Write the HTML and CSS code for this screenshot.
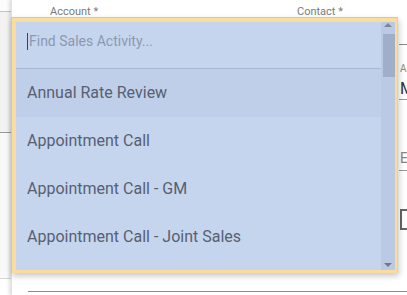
FILE: index.html
```html
<!DOCTYPE html>
<html>
<head>
<meta charset="utf-8">
<link rel="stylesheet" href="styles.css">
</head>
<body>
<div class="page">
  <div class="side">
    <div class="side-a"></div>
    <div class="side-b"></div>
    <div class="side-c"></div>
    <div class="side-d"></div>
  </div>
  <div class="main">
    <div class="labels">
      <span class="lbl">Account *</span>
      <span class="lbl">Contact *</span>
    </div>
    <div class="body">
      <div class="left-col"></div>
      <div class="right-col">
        <div class="rline first"></div>
        <div class="rlabel">As</div>
        <div class="rvalue">M</div>
        <div class="rline"></div>
        <div class="rlabel2">E</div>
        <div class="rline"></div>
        <div class="rbox"></div>
      </div>
    </div>
    <div class="bottom-line"></div>
  </div>

  <div class="dropdown">
    <div class="dd-inner">
      <div class="dd-list">
        <div class="search"><span class="caret"></span><input class="search-input" placeholder="Find Sales Activity..."></div>
        <div class="item active">Annual Rate Review</div>
        <div class="item">Appointment Call</div>
        <div class="item">Appointment Call - GM</div>
        <div class="item">Appointment Call - Joint Sales</div>
      </div>
      <div class="scrollbar">
        <div class="arrow up"></div>
        <div class="thumb"></div>
        <div class="track-rest"></div>
        <div class="arrow down"></div>
      </div>
    </div>
  </div>
</div>
</body>
</html>
```
FILE: styles.css
```css
* { box-sizing: border-box; }
html, body { margin: 0; padding: 0; }
body {
  width: 407px;
  height: 295px;
  overflow: hidden;
  background: #fff;
  font-family: Roboto, "Liberation Sans", sans-serif;
}
.page {
  position: relative;
  display: grid;
  grid-template-columns: 11px 1fr;
  width: 407px;
  height: 295px;
  overflow: hidden;
}
.side {
  display: flex;
  flex-direction: column;
  background: #f7f7f7;
}
.side-a { height: 12px; background: #fcfcfc; border-bottom: 1px solid #c4c4c4; }
.side-b { height: 121px; background: #f2f2f2; border-bottom: 1px solid #9a9a9a; }
.side-c { height: 146px; background: #f8f8f8; border-bottom: 1px solid #d8d8d8; }
.side-d { flex: 1; background: #fff; }

.main {
  position: relative;
  background: #fff;
  border-left: 1px solid #e2e2e2;
  box-shadow: -2px 0 3px rgba(0,0,0,0.12);
  display: flex;
  flex-direction: column;
}
.labels {
  display: grid;
  grid-template-columns: 247px 1fr;
  padding-left: 38px;
  padding-top: 5px;
  height: 20px;
}
.lbl {
  font-size: 11px;
  line-height: 14px;
  color: #7a7a7a;
}
.body {
  display: grid;
  grid-template-columns: 387px 1fr;
  height: 271px;
}
.right-col {
  display: flex;
  flex-direction: column;
  padding-left: 1px;
  overflow: hidden;
}
.rline { height: 1px; background: #9a9a9a; margin-left: -1px; }
.rline.first { margin-top: 24px; background: #8a8a8a; }
.rlabel { margin-top: 18px; font-size: 10px; line-height: 12px; color: #8a8a8a; white-space: nowrap; }
.rvalue { margin-top: 5px; font-size: 16px; line-height: 18px; color: #333; white-space: nowrap; height: 18px; }
.rvalue + .rline { margin-top: 1px; }
.rlabel2 { margin-top: 50px; font-size: 14px; line-height: 16px; color: #888; height: 16px; }
.rlabel2 + .rline { margin-top: 4px; }
.rbox {
  margin-top: 38px;
  width: 20px;
  height: 21px;
  border: 2px solid #666;
}
.bottom-line {
  margin-left: 16px;
  height: 1px;
  background: #8c8c8c;
}

.dropdown {
  position: absolute;
  left: 11px;
  top: 17px;
  width: 387px;
  height: 256px;
  border: 1px solid #cfc8b8;
  border-right-color: #d8d2c2;
  border-bottom: none;
  background: #fadc9e;
  padding: 4px 2px 3px 4px;
  box-shadow: 1px 3px 6px rgba(0,0,0,0.22);
}
.dd-inner {
  display: flex;
  width: 100%;
  height: 100%;
  background: #c5d5ee;
  overflow: hidden;
}
.dd-list {
  width: 365px;
  display: flex;
  flex-direction: column;
}
.search {
  height: 47px;
  display: flex;
  align-items: center;
  padding-left: 11px;
  border-bottom: 1px solid #a9b8d2;
  padding-bottom: 8px;
}
.caret {
  width: 1px;
  height: 17px;
  background: #2b3f9a;
  margin-right: 1px;
}
.search-input {
  border: none;
  outline: none;
  background: transparent;
  font-family: Roboto, "Liberation Sans", sans-serif;
  font-size: 14px;
  padding: 0;
  width: 300px;
  color: #4b5568;
}
.search-input::placeholder { color: #8c98b2; }
.item {
  height: 48px;
  display: flex;
  align-items: center;
  padding-left: 11px;
  padding-bottom: 1px;
  font-size: 16px;
  color: #566072;
  white-space: nowrap;
}
.item.active { background: #bfcfe9; }
.scrollbar {
  width: 14px;
  background: #bacae4;
  display: flex;
  flex-direction: column;
  align-items: center;
}
.arrow {
  width: 0;
  height: 0;
  border-left: 4px solid transparent;
  border-right: 4px solid transparent;
}
.arrow.up { margin-top: 1px; border-bottom: 4px solid #7a8598; }
.arrow.down { margin-bottom: 3px; border-top: 4px solid #6f7a8e; }
.thumb {
  margin-top: 7px;
  width: 12px;
  margin-left: 2px;
  height: 43px;
  background: #a0aec9;
}
.track-rest { flex: 1; }
```
